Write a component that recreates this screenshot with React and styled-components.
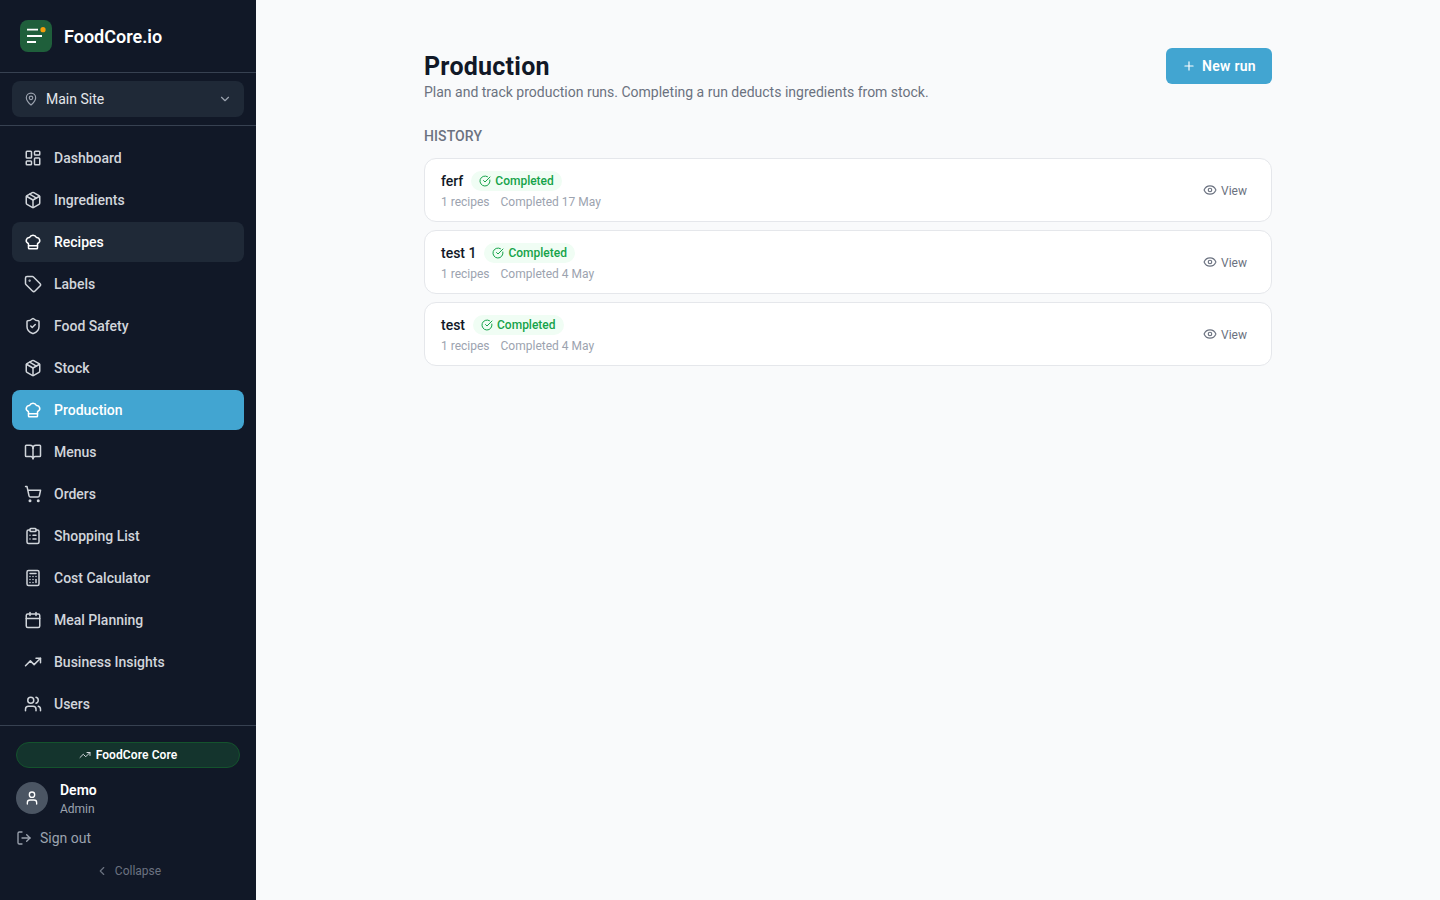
import React from 'react';
import styled, { createGlobalStyle } from 'styled-components';
import {
  LayoutDashboard,
  Package,
  ChefHat,
  Tag,
  ShieldCheck,
  BookOpen,
  ShoppingCart,
  ClipboardList,
  Calculator,
  Calendar,
  TrendingUp,
  Users,
  User,
  LogOut,
  ChevronLeft,
  ChevronDown,
  MapPin,
  CircleCheckBig,
  Eye,
  Plus,
} from 'lucide-react';

const GlobalStyle = createGlobalStyle`
  * { box-sizing: border-box; }
  html, body { margin: 0; padding: 0; height: 100%; }
  body {
    font-family: Roboto, "Noto Sans", "Liberation Sans", sans-serif;
    background: #f9fafb;
    color: #111827;
  }
`;

const Shell = styled.div`
  display: flex;
  height: 900px;
  overflow: hidden;
`;

const Sidebar = styled.aside`
  width: 256px;
  flex-shrink: 0;
  display: flex;
  flex-direction: column;
  background: #111827;
`;

const Brand = styled.div`
  height: 73px;
  display: flex;
  align-items: center;
  gap: 12px;
  padding: 0 20px;
  border-bottom: 1px solid #374151;
`;

const Logo = styled.div`
  width: 32px;
  height: 32px;
  border-radius: 8px;
  background: #1f5f3b;
`;

const BrandName = styled.span`
  font-size: 18px;
  font-weight: 600;
  color: #fff;
`;

const SiteBlock = styled.div`
  height: 53px;
  padding: 8px 12px;
  border-bottom: 1px solid #374151;
`;

const SiteSelect = styled.div`
  height: 36px;
  border-radius: 8px;
  background: #1f2937;
  display: flex;
  align-items: center;
  gap: 8px;
  padding: 0 12px;
  color: #9ca3af;

  span {
    flex: 1;
    font-size: 14px;
    color: #e5e7eb;
  }
`;

const Nav = styled.nav`
  flex: 1;
  display: flex;
  flex-direction: column;
  gap: 2px;
  padding: 12px 12px 1px;
`;

const NavItem = styled.a`
  height: 40px;
  display: flex;
  align-items: center;
  gap: 12px;
  padding: 0 12px;
  border-radius: 8px;
  font-size: 14px;
  font-weight: 500;
  color: ${({ $state }) => ($state ? '#fff' : '#d1d5db')};
  background: ${({ $state }) =>
    $state === 'active' ? '#42a5d1' : $state === 'hover' ? '#1f2937' : 'transparent'};
`;

const Footer = styled.div`
  height: 175px;
  padding: 16px 16px 0;
  border-top: 1px solid #374151;
`;

const PlanPill = styled.div`
  height: 26px;
  border-radius: 13px;
  background: #14342d;
  border: 1px solid #14532d;
  display: flex;
  align-items: center;
  justify-content: center;
  gap: 5px;
  font-size: 12px;
  font-weight: 600;
  letter-spacing: 0.1px;
  color: #fff;

  svg {
    color: #d1d5db;
  }
`;

const UserRow = styled.div`
  display: flex;
  align-items: flex-start;
  gap: 12px;
  margin-top: 14px;
`;

const Avatar = styled.div`
  width: 32px;
  height: 32px;
  border-radius: 50%;
  background: #4b5563;
  color: #fff;
  display: flex;
  align-items: center;
  justify-content: center;
`;

const UserName = styled.div`
  font-size: 14px;
  line-height: 16px;
  font-weight: 600;
  color: #fff;
`;

const UserRole = styled.div`
  font-size: 12px;
  line-height: 22px;
  height: 20px;
  color: #9ca3af;
`;

const SignOut = styled.div`
  display: flex;
  align-items: center;
  gap: 8px;
  margin-top: 10px;
  height: 20px;
  font-size: 14px;
  color: #9ca3af;
`;

const Collapse = styled.div`
  display: flex;
  align-items: center;
  justify-content: center;
  gap: 6px;
  margin-top: 15px;
  height: 16px;
  font-size: 12px;
  color: #6b7280;
`;

const Main = styled.main`
  flex: 1;
  min-width: 0;
  padding: 48px 24px;
`;

const Content = styled.div`
  width: 848px;
  margin: 0 auto;
`;

const PageHeader = styled.header`
  display: flex;
  justify-content: space-between;
  align-items: flex-start;
  height: 52px;
`;

const Title = styled.h1`
  margin: 0;
  padding-top: 2px;
  font-size: 25px;
  line-height: 34px;
  font-weight: 700;
  letter-spacing: 0.25px;
  color: #111827;
`;

const Subtitle = styled.p`
  margin: 0;
  font-size: 14px;
  line-height: 17px;
  color: #6b7280;
`;

const PrimaryButton = styled.button`
  height: 36px;
  padding: 0 16px;
  display: flex;
  align-items: center;
  gap: 6px;
  border: none;
  border-radius: 6px;
  background: #42a5d1;
  color: #fff;
  font-family: inherit;
  font-size: 14px;
  font-weight: 600;
  letter-spacing: 0.3px;
`;

const SectionLabel = styled.h2`
  margin: 26px 0 12px;
  font-size: 14px;
  line-height: 20px;
  font-weight: 500;
  letter-spacing: 0.1px;
  text-transform: uppercase;
  color: #6b7280;
`;

const RunList = styled.div`
  display: flex;
  flex-direction: column;
  gap: 8px;
`;

const RunCard = styled.div`
  height: 64px;
  display: flex;
  align-items: center;
  justify-content: space-between;
  padding: 0 24px 0 16px;
  background: #fff;
  border: 1px solid #e5e7eb;
  border-radius: 12px;
`;

const RunTop = styled.div`
  display: flex;
  align-items: center;
  gap: 8px;
  height: 22px;
`;

const RunName = styled.span`
  font-size: 14px;
  font-weight: 500;
  color: #111827;
`;

const StatusBadge = styled.span`
  height: 20px;
  display: flex;
  align-items: center;
  gap: 4px;
  padding: 0 8px;
  border-radius: 10px;
  background: #f0fdf4;
  color: #16a34a;
  font-size: 12px;
  font-weight: 500;
`;

const RunMeta = styled.div`
  display: flex;
  gap: 11px;
  margin-top: 1px;
  font-size: 12px;
  line-height: 18px;
  color: #9ca3af;
`;

const ViewLink = styled.a`
  display: flex;
  align-items: center;
  gap: 4px;
  font-size: 12px;
  color: #6b7280;

  span {
    padding-top: 2px;
  }
`;

const navItems = [
  { label: 'Dashboard', icon: LayoutDashboard },
  { label: 'Ingredients', icon: Package },
  { label: 'Recipes', icon: ChefHat, state: 'hover' },
  { label: 'Labels', icon: Tag },
  { label: 'Food Safety', icon: ShieldCheck },
  { label: 'Stock', icon: Package },
  { label: 'Production', icon: ChefHat, state: 'active' },
  { label: 'Menus', icon: BookOpen },
  { label: 'Orders', icon: ShoppingCart },
  { label: 'Shopping List', icon: ClipboardList },
  { label: 'Cost Calculator', icon: Calculator },
  { label: 'Meal Planning', icon: Calendar },
  { label: 'Business Insights', icon: TrendingUp },
  { label: 'Users', icon: Users },
];

const runs = [
  { name: 'ferf', date: '17 May' },
  { name: 'test 1', date: '4 May' },
  { name: 'test', date: '4 May' },
];

const App = () => (
  <Shell>
    <GlobalStyle />
    <Sidebar>
      <Brand>
        <Logo>
          <svg width="32" height="32" viewBox="0 0 32 32">
            <path d="M7 9.7h11M7 16h15M7 22h9" stroke="#fff" strokeWidth="1.8" fill="none" />
            <circle cx="23" cy="9.7" r="2.6" fill="#f59e0b" />
          </svg>
        </Logo>
        <BrandName>FoodCore.io</BrandName>
      </Brand>
      <SiteBlock>
        <SiteSelect>
          <MapPin size={14} />
          <span>Main Site</span>
          <ChevronDown size={14} />
        </SiteSelect>
      </SiteBlock>
      <Nav>
        {navItems.map(({ label, icon: Icon, state }) => (
          <NavItem key={label} $state={state}>
            <Icon size={18} />
            {label}
          </NavItem>
        ))}
      </Nav>
      <Footer>
        <PlanPill>
          <TrendingUp size={12} />
          FoodCore Core
        </PlanPill>
        <UserRow>
          <Avatar>
            <User size={16} />
          </Avatar>
          <div>
            <UserName>Demo</UserName>
            <UserRole>Admin</UserRole>
          </div>
        </UserRow>
        <SignOut>
          <LogOut size={16} />
          Sign out
        </SignOut>
        <Collapse>
          <ChevronLeft size={14} />
          Collapse
        </Collapse>
      </Footer>
    </Sidebar>
    <Main>
      <Content>
        <PageHeader>
          <div>
            <Title>Production</Title>
            <Subtitle>Plan and track production runs. Completing a run deducts ingredients from stock.</Subtitle>
          </div>
          <PrimaryButton>
            <Plus size={14} />
            New run
          </PrimaryButton>
        </PageHeader>
        <SectionLabel>History</SectionLabel>
        <RunList>
          {runs.map((run) => (
            <RunCard key={run.name}>
              <div>
                <RunTop>
                  <RunName>{run.name}</RunName>
                  <StatusBadge>
                    <CircleCheckBig size={12} />
                    Completed
                  </StatusBadge>
                </RunTop>
                <RunMeta>
                  <span>1 recipes</span>
                  <span>Completed {run.date}</span>
                </RunMeta>
              </div>
              <ViewLink>
                <Eye size={14} />
                <span>View</span>
              </ViewLink>
            </RunCard>
          ))}
        </RunList>
      </Content>
    </Main>
  </Shell>
);

export default App;
